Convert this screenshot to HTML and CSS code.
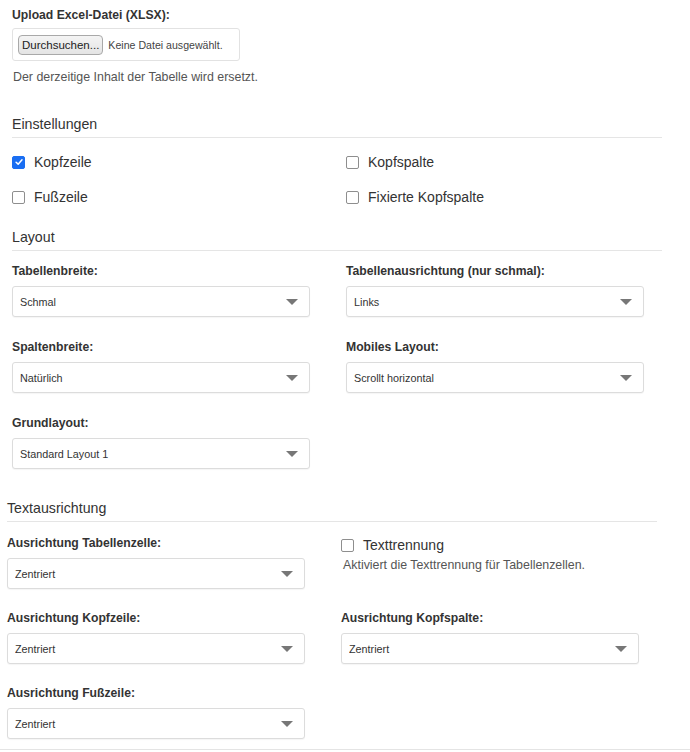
FILE: index.html
```html
<!DOCTYPE html>
<html lang="de">
<head>
<meta charset="UTF-8">
<meta name="viewport" content="width=device-width, initial-scale=1.0">
<title>Tabelle bearbeiten</title>
<link rel="stylesheet" href="styles.css">
</head>
<body>
    <div class="panel">
        <div class="upload">
            <div class="field-label">Upload Excel-Datei (XLSX):</div>
            <label class="file">
                <input type="file" accept=".xlsx">
                <span class="file-btn">Durchsuchen...</span>
                <span class="file-name">Keine Datei ausgewählt.</span>
            </label>
            <p class="help">Der derzeitige Inhalt der Tabelle wird ersetzt.</p>
        </div>

        <div class="section section-first">
            <h3 class="section-title">Einstellungen</h3>
            <div class="grid checks">
                <label class="check"><input type="checkbox" checked><span class="box"><svg viewBox="0 0 12 12" width="10" height="10"><path d="M2.5 6.3 L5 8.6 L9.6 3.4" fill="none" stroke="#fff" stroke-width="1.8" stroke-linecap="round" stroke-linejoin="round"/></svg></span>Kopfzeile</label>
                <label class="check"><input type="checkbox"><span class="box"></span>Kopfspalte</label>
                <label class="check"><input type="checkbox"><span class="box"></span>Fußzeile</label>
                <label class="check"><input type="checkbox"><span class="box"></span>Fixierte Kopfspalte</label>
            </div>
        </div>

        <div class="section section-layout">
            <h3 class="section-title">Layout</h3>
            <div class="grid">
                <div class="field">
                    <div class="field-label">Tabellenbreite:</div>
                    <div class="select"><select><option>Schmal</option><option>Breit</option></select></div>
                </div>
                <div class="field">
                    <div class="field-label">Tabellenausrichtung (nur schmal):</div>
                    <div class="select"><select><option>Links</option><option>Zentriert</option><option>Rechts</option></select></div>
                </div>
                <div class="field">
                    <div class="field-label">Spaltenbreite:</div>
                    <div class="select"><select><option>Natürlich</option><option>Gleichmäßig</option></select></div>
                </div>
                <div class="field">
                    <div class="field-label">Mobiles Layout:</div>
                    <div class="select"><select><option>Scrollt horizontal</option><option>Gestapelt</option></select></div>
                </div>
                <div class="field">
                    <div class="field-label">Grundlayout:</div>
                    <div class="select"><select><option>Standard Layout 1</option><option>Standard Layout 2</option></select></div>
                </div>
            </div>
        </div>

        <div class="section section-text">
            <h3 class="section-title">Textausrichtung</h3>
            <div class="grid">
                <div class="field">
                    <div class="field-label">Ausrichtung Tabellenzelle:</div>
                    <div class="select"><select><option>Zentriert</option><option>Links</option><option>Rechts</option></select></div>
                </div>
                <div class="field">
                    <label class="check"><input type="checkbox"><span class="box"></span>Texttrennung</label>
                    <p class="help help-tight">Aktiviert die Texttrennung für Tabellenzellen.</p>
                </div>
                <div class="field">
                    <div class="field-label">Ausrichtung Kopfzeile:</div>
                    <div class="select"><select><option>Zentriert</option><option>Links</option><option>Rechts</option></select></div>
                </div>
                <div class="field">
                    <div class="field-label">Ausrichtung Kopfspalte:</div>
                    <div class="select"><select><option>Zentriert</option><option>Links</option><option>Rechts</option></select></div>
                </div>
                <div class="field">
                    <div class="field-label">Ausrichtung Fußzeile:</div>
                    <div class="select"><select><option>Zentriert</option><option>Links</option><option>Rechts</option></select></div>
                </div>
            </div>
        </div>
    </div>
</body>
</html>
```

FILE: styles.css
```css
body {
    margin: 0;
    padding: 0;
    background-color: #fff;
    color: #333;
    font-family: "Liberation Sans", Arial, sans-serif;
    font-size: 13px;
}
.panel {
    width: 690px;
    height: 749px;
    border-bottom: 1px solid #e4e4e4;
    overflow: hidden;
}
.upload {
    padding: 7px 0 0 12px;
}
.field-label {
    font-weight: bold;
    font-size: 12.2px;
    line-height: 16px;
    margin-bottom: 7px;
}
.upload .field-label {
    margin-bottom: 5px;
}
.file {
    display: flex;
    align-items: center;
    width: 216px;
    height: 31px;
    padding: 0 5px;
    border: 1px solid #e2e2e2;
    border-radius: 3px;
    font-size: 11.5px;
    white-space: nowrap;
    cursor: pointer;
}
.file input {
    display: none;
}
.file-btn {
    height: 18px;
    line-height: 18px;
    padding: 0 3px;
    border: 1px solid #a9a9a9;
    border-radius: 4px;
    background: linear-gradient(#f4f4f4, #e4e4e4);
    color: #222;
    margin-right: 5px;
}
.file-name {
    color: #444;
    font-size: 10.6px;
}
.help {
    margin: 8px 0 0 1px;
    line-height: 16px;
    color: #555;
    font-size: 12.4px;
}
.help-tight {
    margin: 2px 0 0 2px;
}
.section {
    margin-left: 12px;
    width: 650px;
}
.section-title {
    margin: 0;
    padding-bottom: 4px;
    border-bottom: 1px solid #e5e5e5;
    font-size: 14.2px;
    font-weight: normal;
    line-height: 18px;
}
.section-first .section-title {
    margin-top: 30px;
}
.section-layout .section-title {
    margin-top: 21px;
}
.section-text {
    margin-left: 7px;
}
.section-text .section-title {
    margin-top: 8px;
}
.grid {
    display: grid;
    grid-template-columns: 298px 298px;
    column-gap: 36px;
    padding-top: 12px;
}
.section-text .grid {
    padding-top: 13px;
}
.field {
    margin-bottom: 22px;
}
.section-text .field {
    margin-bottom: 21px;
}
.checks {
    padding-top: 14px;
    row-gap: 15px;
}
.check {
    display: flex;
    align-items: center;
    font-size: 14px;
    line-height: 20px;
    cursor: pointer;
}
.check input {
    display: none;
}
.box {
    width: 11px;
    height: 11px;
    border: 1px solid #8e8e8e;
    border-radius: 2px;
    margin-right: 9px;
    display: flex;
    align-items: center;
    justify-content: center;
    background-color: #fff;
}
.check input:checked + .box {
    border-color: #1a6ef2;
    background-color: #1a6ef2;
}
.select {
    position: relative;
}
.select select {
    appearance: none;
    -webkit-appearance: none;
    display: block;
    width: 100%;
    height: 31px;
    padding: 0 7px;
    border: 1px solid #dcdcdc;
    border-radius: 3px;
    box-shadow: 0 1px 1px rgba(0, 0, 0, 0.04);
    background-color: #fff;
    color: #333;
    font-family: "Liberation Sans", Arial, sans-serif;
    font-size: 10.8px;
}
.select::after {
    content: "";
    position: absolute;
    right: 12px;
    top: 13px;
    border-left: 6px solid transparent;
    border-right: 6px solid transparent;
    border-top: 6px solid #777;
    pointer-events: none;
}
```
